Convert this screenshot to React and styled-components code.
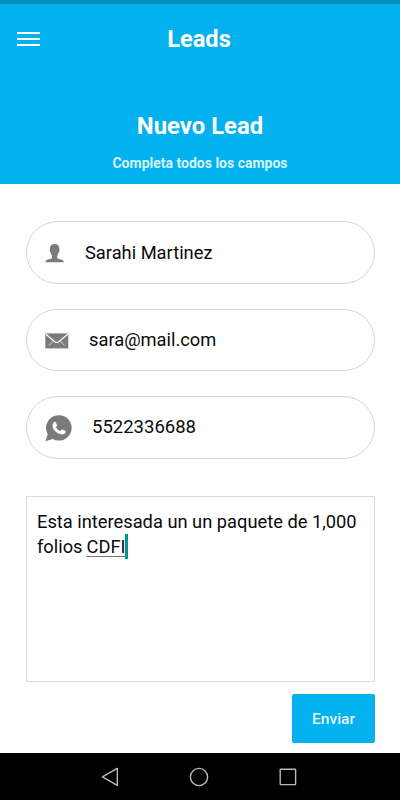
import styled, { createGlobalStyle } from "styled-components";

export default function App() {
  return (
    <Screen>
      <GlobalStyle />
      <Header>
        <Toolbar>
          <MenuButton aria-label="Menu">
            <MenuLine />
            <MenuLine />
            <MenuLine />
          </MenuButton>
          <ToolbarTitle>Leads</ToolbarTitle>
        </Toolbar>
        <Title>Nuevo Lead</Title>
        <Subtitle>Completa todos los campos</Subtitle>
      </Header>
      <Form>
        <Field>
          <UserIcon />
          <FieldText $size={18.3}>Sarahi Martinez</FieldText>
        </Field>
        <Field>
          <MailIcon />
          <FieldText $size={18.3}>sara@mail.com</FieldText>
        </Field>
        <Field>
          <PhoneIcon />
          <FieldText $size={18.5}>5522336688</FieldText>
        </Field>
        <Comments>
          <Line>
            <span>Esta interesada un un paquete de 1,000</span>
          </Line>
          <Line>
            <span>folios</span>
            <Typing>CDFI</Typing>
            <Caret />
          </Line>
        </Comments>
        <SubmitButton>Enviar</SubmitButton>
      </Form>
      <NavBar>
        <svg width="18" height="20" viewBox="0 0 18 20">
          <path d="M16.3 1.4v17L1.4 9.9z" />
        </svg>
        <svg width="20" height="20" viewBox="0 0 20 20">
          <circle cx="10" cy="10" r="8.6" />
        </svg>
        <svg width="18" height="18" viewBox="0 0 18 18">
          <rect x="1.2" y="1.2" width="15.4" height="15.4" rx="0.5" />
        </svg>
      </NavBar>
    </Screen>
  );
}

function UserIcon() {
  return (
    <svg width="20" height="19" viewBox="0 0 20 19" fill="#7b7b7b">
      <path d="M9.7 0C12.8 0 14.3 1.7 14.3 4.5c0 .5-.1 1 .1 1.5.3 1.1-.2 2-.8 2.6-.3 1.4-.8 2.3-1.4 3v1.9c0 .8.7 1.2 2 1.5 2.6.6 4.6 1.2 4.7 3.3H.3c.1-2.1 2.1-2.7 4.7-3.3 1.3-.3 2-.7 2-1.5v-1.900c-.6-.7-1.100-1.600-1.400-3-.6-.6-1.100-1.500-.8-2.600.2-.5.1-1 .1-1.500C4.900 1.700 6.700 0 9.700 0z" />
    </svg>
  );
}

function MailIcon() {
  return (
    <svg width="24" height="16" viewBox="0 0 24 16">
      <rect x="0.3" y="0.4" width="23" height="15" fill="#7b7b7b" />
      <path
        d="M.6 1 9.8 8.7q2 1.5 4 0L23 1"
        fill="none"
        stroke="#fff"
        strokeWidth="1.1"
      />
      <path
        d="M8 8.3 4 12.5M15.6 8.3l4 4.2"
        fill="none"
        stroke="#e4e4e4"
        strokeWidth="0.8"
      />
    </svg>
  );
}

function PhoneIcon() {
  return (
    <svg width="27" height="27" viewBox="0 0 27 27">
      <path
        d="M14 .2a12.7 12.7 0 1 1-6.4 23.7L.5 26.3l2.3-7A12.7 12.7 0 0 1 14 .2z"
        fill="#7b7b7b"
      />
      <path
        d="M9.2 7.1c.5-.5 1.3-.4 1.6.2l1.2 2.6c.2.4.1.8-.2 1.2l-.9 1.2c1 1.9 2.4 3.2 4.4 4l1.3-1.5c.3-.3.7-.4 1.1-.2l2.5 1.2c.5.3.6.6.5 1.2-.3 1.7-2 2.7-3.9 2.5-4.8-.7-8.6-4.3-9.2-8-.2-1.8.5-3.5 1.6-4.4z"
        fill="#fff"
      />
    </svg>
  );
}

const GlobalStyle = createGlobalStyle`
  body {
    margin: 0;
    background: #fff;
    font-family: Roboto, "Liberation Sans", sans-serif;
  }

  * {
    box-sizing: border-box;
  }
`;

const Screen = styled.div`
  display: flex;
  flex-direction: column;
  width: 400px;
  height: 800px;
  overflow: hidden;
`;

const Header = styled.header`
  height: 184px;
  border-top: 4px solid #0290c0;
  background: #02b1ee;
  color: #fff;
  text-align: center;
`;

const Toolbar = styled.div`
  display: grid;
  grid-template-columns: 24px 1fr 24px;
  align-items: center;
  height: 70px;
  padding: 0 17px;
`;

const MenuButton = styled.button`
  display: flex;
  flex-direction: column;
  gap: 4px;
  padding: 0;
  border: 0;
  background: none;
`;

const MenuLine = styled.span`
  width: 23px;
  height: 2px;
  background: #fff;
`;

const ToolbarTitle = styled.h1`
  margin: 0;
  padding-right: 2px;
  font-size: 23.6px;
  font-weight: 700;
`;

const Title = styled.h2`
  margin: 37px 0 0;
  font-size: 23.9px;
  font-weight: 700;
  line-height: 30px;
`;

const Subtitle = styled.p`
  margin: 12px 0 0;
  color: #d4f6ff;
  font-size: 14px;
  font-weight: 700;
  line-height: 20px;
`;

const Form = styled.main`
  display: flex;
  flex: 1;
  flex-direction: column;
  padding: 37px 25px 0 26px;
`;

const Field = styled.div`
  display: flex;
  align-items: center;
  gap: 20px;
  height: 62.5px;
  margin-bottom: 25px;
  padding: 0 18px;
  border: 1px solid #d5d5d9;
  border-radius: 32px;

  svg {
    margin-top: 3px;
  }
`;

const FieldText = styled.span`
  color: #0a0a0a;
  font-size: ${({ $size }) => $size}px;
  line-height: 23px;
`;

const Comments = styled.div`
  height: 186px;
  margin-top: 12px;
  padding: 12px 10px;
  border: 1px solid #dcdcdc;
  color: #0a0a0a;
  font-size: 18.3px;
`;

const Line = styled.div`
  display: flex;
  align-items: baseline;
  gap: 4px;
  height: 25px;
  line-height: 25px;
  white-space: nowrap;
`;

const Typing = styled.span`
  text-decoration: underline #777 1px;
  text-underline-offset: 3px;
`;

const Caret = styled.span`
  align-self: stretch;
  width: 3px;
  margin-left: -5px;
  background: #009688;
`;

const SubmitButton = styled.button`
  align-self: flex-end;
  width: 83px;
  height: 49px;
  margin-top: 12px;
  padding: 1px 0 0;
  border: 0;
  border-radius: 2px;
  background: #02b1ee;
  color: #e6faff;
  font-family: inherit;
  font-size: 15.5px;
  font-weight: 500;
`;

const NavBar = styled.nav`
  display: flex;
  align-items: center;
  justify-content: space-between;
  height: 47px;
  padding: 0 103px 0 101px;
  background: #000;

  svg {
    fill: none;
    stroke: #b9b9b9;
    stroke-width: 1.4;
    stroke-linejoin: round;
  }
`;
